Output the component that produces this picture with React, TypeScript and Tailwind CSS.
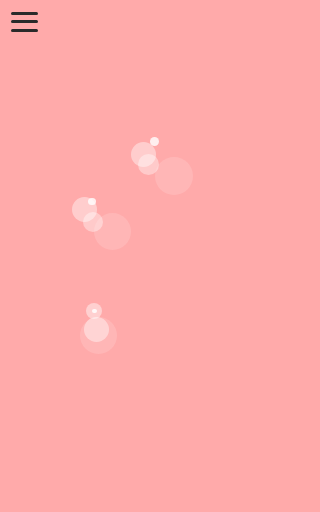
type Bubble = { x: number; y: number; r: number; o: number };

// each cluster: big faint bubble, two mid bubbles, one bright dot
const bubbles: Bubble[] = [
  // cluster 1
  { x: 174.3, y: 175.5, r: 19, o: 0.15 },
  { x: 143.8, y: 154.5, r: 12.5, o: 0.42 },
  { x: 148, y: 164.8, r: 10.5, o: 0.38 },
  { x: 154.4, y: 141.5, r: 4.3, o: 0.8 },
  // cluster 2
  { x: 112.6, y: 231, r: 18.5, o: 0.15 },
  { x: 84.7, y: 209.6, r: 12.7, o: 0.42 },
  { x: 93.3, y: 221.7, r: 10, o: 0.38 },
  { x: 91.8, y: 201.5, r: 3.8, o: 0.8 },
  // cluster 3
  { x: 98.3, y: 335.5, r: 18.3, o: 0.15 },
  { x: 96.6, y: 329.3, r: 12.4, o: 0.42 },
  { x: 94.3, y: 311.3, r: 8.2, o: 0.45 },
  { x: 94.6, y: 311.3, r: 2.2, o: 0.85 },
];

export default function App() {
  return (
    <div className="relative w-full h-screen min-h-[512px] overflow-hidden bg-[#ffaaaa] font-['Liberation_Sans',sans-serif]">
      {/* Menu button */}
      <button className="flex flex-col gap-[5.7px] pl-[11px] pt-[11.5px]" aria-label="menu">
        <span className="block w-[27px] h-[3px] rounded-full bg-[#2a2a2a]" />
        <span className="block w-[27px] h-[3px] rounded-full bg-[#2a2a2a]" />
        <span className="block w-[27px] h-[3px] rounded-full bg-[#2a2a2a]" />
      </button>

      {/* Bubbles */}
      {bubbles.map((b, i) => (
        <div
          key={i}
          className="absolute rounded-full bg-white"
          style={{
            left: b.x - b.r,
            top: b.y - b.r,
            width: b.r * 2,
            height: b.r * 2,
            opacity: b.o,
          }}
        />
      ))}
    </div>
  );
}
